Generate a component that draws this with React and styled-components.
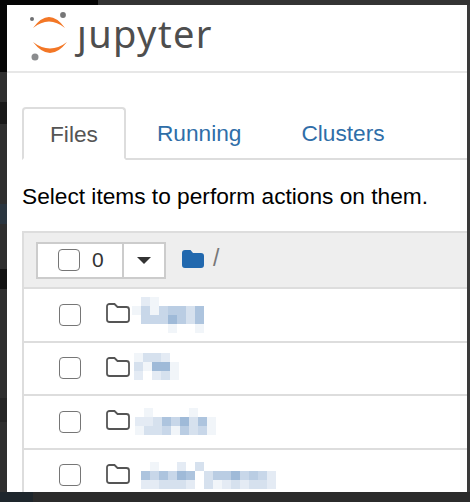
import React from "react";
import styled, { createGlobalStyle } from "styled-components";

const TABS = [
  { label: "Files", active: true },
  { label: "Running" },
  { label: "Clusters" },
];

// blurred file names, tint level of each mosaic cell (0-9)
const FILES = [
  { gap: 2, shift: 0, cells: ["02100000", "14145536", "04447536", "00001001"] },
  { gap: 4, shift: -2, cells: ["13320", "31771", "20231"] },
  { gap: 5, shift: 0, cells: ["010000100", "223647361", "133415341"] },
  { gap: 11, shift: 0, cells: ["010020300000000", "646476035574542", "223332031232332"] },
];

const GlobalStyle = createGlobalStyle`
  html, body {
    margin: 0;
    padding: 0;
    background: #333;
    overflow: hidden;
  }
`;

const Desktop = styled.div`
  width: 470px;
  height: 502px;
  display: grid;
  grid-template-columns: 7px 460px 3px;
  grid-template-rows: 5px 487px 10px;
  background: #323232;
  overflow: hidden;
  font-family: "Liberation Sans", Arial, sans-serif;
`;

const TopStrip = styled.div`
  grid-column: 1 / 4;
  background: linear-gradient(to right, #050505 98px, #343434 98px);
`;

const LeftStrip = styled.div`
  display: flex;
  flex-direction: column;
  background: #2f2f2f;
`;

const LeftBand = styled.div`
  height: ${(p) => p.$h}px;
  background: ${(p) => p.$color};
`;

const BottomStrip = styled.div`
  grid-column: 1 / 4;
  background: linear-gradient(to right, #1e262c 33px, #2b2b2b 33px);
`;

const Notebook = styled.div`
  background: #fff;
  overflow: hidden;
  display: flex;
  flex-direction: column;
`;

const Header = styled.header`
  box-sizing: border-box;
  height: 68px;
  flex: none;
  border-bottom: 2px solid #e7e7e7;
  display: flex;
  align-items: flex-start;
  padding: 5px 0 0 22px;
`;

const Wordmark = styled.span`
  font-family: "Noto Sans", "Open Sans", sans-serif;
  font-size: 38px;
  line-height: 44px;
  letter-spacing: 1.4px;
  color: #4e4e4e;
  margin-left: 4px;
  margin-top: 1px;
`;

const Main = styled.main`
  padding: 34px 0 0 15px;
`;

const Tabs = styled.nav`
  height: 51px;
  display: flex;
  border-bottom: 2px solid #ddd;
`;

const Tab = styled.a`
  box-sizing: border-box;
  height: ${(p) => (p.$active ? 53 : 51)}px;
  padding: 2px ${(p) => (p.$active ? 26 : 28)}px 0;
  margin-right: ${(p) => (p.$active ? 1 : 0)}px;
  display: flex;
  align-items: center;
  font-size: 22.7px;
  color: ${(p) => (p.$active ? "#555" : "#2f6ea8")};
  background: #fff;
  border: 2px solid ${(p) => (p.$active ? "#ddd" : "transparent")};
  border-bottom-color: ${(p) => (p.$active ? "#fff" : "transparent")};
  border-radius: 4px 4px 0 0;
`;

const Hint = styled.p`
  margin: 20px 0 0;
  font-size: 22.7px;
  line-height: 33px;
  color: #000;
  white-space: nowrap;
`;

const List = styled.div`
  margin-top: 18px;
  border-left: 2px solid #ddd;
`;

const Toolbar = styled.div`
  height: 54px;
  background: #eee;
  border-top: 2px solid #ddd;
  border-bottom: 2px solid #ddd;
  display: flex;
  align-items: center;
  padding-left: 12px;
`;

const SelectGroup = styled.div`
  width: 130px;
  height: 37px;
  box-sizing: border-box;
  background: #fff;
  border: 2px solid #ccc;
  display: flex;
`;

const SelectAll = styled.div`
  box-sizing: border-box;
  width: 84px;
  display: flex;
  align-items: center;
  padding-left: 20px;
  gap: 12px;
  font-size: 21px;
  color: #333;
`;

const Caret = styled.div`
  flex: 1;
  border-left: 2px solid #ccc;
  display: flex;
  align-items: center;
  justify-content: center;

  &::after {
    content: "";
    border-top: 7px solid #333;
    border-left: 7px solid transparent;
    border-right: 7px solid transparent;
  }
`;

const Checkbox = styled.span`
  display: block;
  flex: none;
  box-sizing: border-box;
  width: 22px;
  height: 22px;
  background: #fff;
  border: 1.5px solid #767676;
  border-radius: 4px;
`;

const Breadcrumb = styled.div`
  display: flex;
  align-items: center;
  gap: 9px;
  margin: -3px 0 0 16px;
  font-size: 23px;
  color: #777;
`;

const Row = styled.div`
  box-sizing: border-box;
  height: 53.5px;
  padding-left: 35px;
  border-bottom: 2px solid #ddd;
  display: flex;
  align-items: center;
`;

const RowIcon = styled.span`
  display: flex;
  margin-left: 25px;
  margin-right: ${(p) => p.$gap}px;
  margin-top: -3px;
`;

const Mosaic = styled.div`
  display: grid;
  grid-auto-rows: 9px;
  grid-template-columns: repeat(${(p) => p.$cols}, 9px);
  transform: translateY(${(p) => p.$shift}px);
`;

const Cell = styled.span`
  background: ${(p) => `rgba(118, 156, 200, ${p.$level * 0.1})`};
`;

const JupyterLogo = () => (
  <svg width="44" height="52" viewBox="0 0 44 52">
    <path d="M4 18Q20 -4 36 18Q20 5 4 18Z" fill="#f37726" />
    <path d="M4 32Q21 54 38 32Q21 45 4 32Z" fill="#f37726" />
    <circle cx="34" cy="5" r="2.9" fill="#767677" />
    <circle cx="3" cy="9" r="2" fill="#6f7072" />
    <circle cx="6" cy="47" r="3.5" fill="#8b8c8e" />
  </svg>
);

const SolidFolder = () => (
  <svg width="22" height="18" viewBox="0 0 22 18">
    <path
      d="M3 0h5.5l2.5 3h8a3 3 0 0 1 3 3v9a3 3 0 0 1-3 3H3a3 3 0 0 1-3-3V3a3 3 0 0 1 3-3Z"
      fill="#2168ae"
    />
  </svg>
);

const OutlineFolder = () => (
  <svg width="24" height="20" viewBox="0 0 24 20">
    <path
      d="M3.5 1h5l3 3h9a2.5 2.5 0 0 1 2.5 2.5v10a2.5 2.5 0 0 1-2.5 2.5h-17A2.5 2.5 0 0 1 1 16.5v-13A2.5 2.5 0 0 1 3.5 1Z"
      fill="none"
      stroke="#555"
      strokeWidth="1.8"
    />
  </svg>
);

const App = () => (
  <>
    <GlobalStyle />
    <Desktop>
      <TopStrip />
      <LeftStrip>
        <LeftBand $h={67} $color="#060606" />
        <LeftBand $h={30} $color="#2f2f2f" />
        <LeftBand $h={22} $color="#191919" />
        <LeftBand $h={80} $color="#2f2f2f" />
        <LeftBand $h={20} $color="#2b3640" />
        <LeftBand $h={45} $color="#2f2f2f" />
        <LeftBand $h={20} $color="#121212" />
        <LeftBand $h={109} $color="#2f2f2f" />
        <LeftBand $h={24} $color="#262626" />
      </LeftStrip>
      <Notebook>
        <Header>
          <JupyterLogo />
          <Wordmark aria-label="jupyter">ȷupyter</Wordmark>
        </Header>
        <Main>
          <Tabs>
            {TABS.map((tab) => (
              <Tab key={tab.label} $active={tab.active}>
                {tab.label}
              </Tab>
            ))}
          </Tabs>
          <Hint>Select items to perform actions on them.</Hint>
          <List>
            <Toolbar>
              <SelectGroup>
                <SelectAll>
                  <Checkbox />0
                </SelectAll>
                <Caret />
              </SelectGroup>
              <Breadcrumb>
                <SolidFolder />/
              </Breadcrumb>
            </Toolbar>
            {FILES.map((file, i) => (
              <Row key={i}>
                <Checkbox />
                <RowIcon $gap={file.gap}>
                  <OutlineFolder />
                </RowIcon>
                <Mosaic $cols={file.cells[0].length} $shift={file.shift}>
                  {file.cells
                    .join("")
                    .split("")
                    .map((level, j) => (
                      <Cell key={j} $level={Number(level)} />
                    ))}
                </Mosaic>
              </Row>
            ))}
          </List>
        </Main>
      </Notebook>
      <LeftBand $h={487} $color="#3a3a3a" />
      <BottomStrip />
    </Desktop>
  </>
);

export default App;
